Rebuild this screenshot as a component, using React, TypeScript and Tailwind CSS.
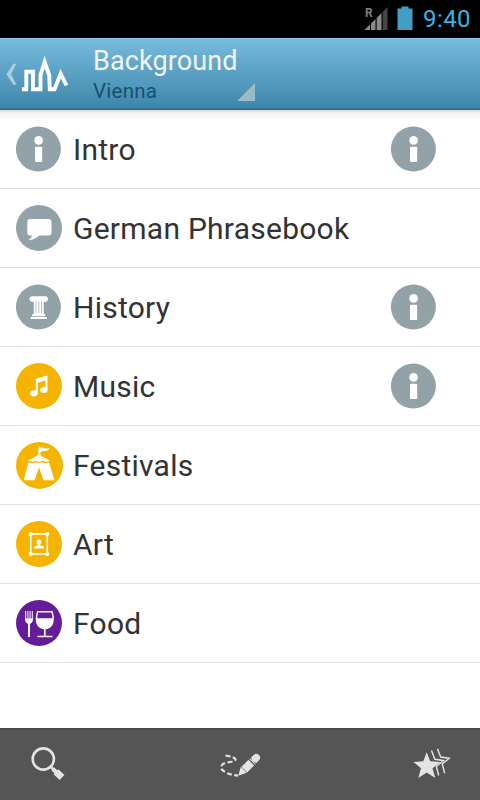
import React from "react";

const InfoIcon = () => (
  <svg className="size-12 shrink-0" viewBox="0 0 48 48">
    <circle cx="23.4" cy="24" r="22.5" fill="#93a1a8" />
    <circle cx="23.6" cy="15.4" r="4.3" fill="#fff" />
    <rect x="20" y="21.8" width="7.2" height="15.2" rx="1" fill="#fff" />
  </svg>
);

const PhraseIcon = () => (
  <svg className="size-12 shrink-0" viewBox="0 0 48 48">
    <circle cx="24" cy="24" r="23" fill="#93a1a8" />
    <path
      d="M15 15h18.500q3 0 3 3v10.500q0 3-3 3H24.500Q20 35.500 13.500 36.300Q17 34 17 31.500H15q-2.700 0-2.700-3V18q0-3 2.700-3z"
      fill="#fff"
    />
  </svg>
);

const HistoryIcon = () => (
  <svg className="size-12 shrink-0" viewBox="0 0 48 48">
    <circle cx="23.4" cy="24" r="22.5" fill="#93a1a8" />
    <g fill="#fff">
      <path d="M17.500 13.200h12.500a2.900 2.900 0 1 1-1.300 5.400V31H18.800V18.600a2.900 2.900 0 1 1-1.300-5.400z" />
      <rect x="17.2" y="31" width="13" height="2.2" />
      <rect x="15.7" y="34" width="16.3" height="2" />
    </g>
    <path d="M21 18.500V30M23.800 18.500V30M26.500 18.500V30" stroke="#93a1a8" strokeWidth="0.7" />
  </svg>
);

const MusicIcon = () => (
  <svg className="size-12 shrink-0" viewBox="0 0 48 48">
    <circle cx="24" cy="24" r="23" fill="#f5b400" />
    <g fill="#fff">
      <path d="M20.800 16.800L32.500 13.500V28H30.500V18.500L22.800 20.700V31H20.800z" />
      <ellipse cx="18.9" cy="31.3" rx="3.8" ry="3.1" />
      <ellipse cx="28.9" cy="28" rx="3.7" ry="3" />
    </g>
  </svg>
);

const FestivalIcon = () => (
  <svg className="size-12 shrink-0" viewBox="0 0 48 48">
    <circle cx="24.5" cy="24.4" r="23.5" fill="#f5b400" />
    <g fill="#fff">
      <path d="M23.400 5.500h1v1.300q3-.800 5 .200t5.700.3q-2 3-5 2.700t-4.700 1.200V14q4 3.500 9.300 5.200q-1.700 1.900-3.700 1.500t-3.800-.9q-3.300 1.700-6.500 0-2.200 1.100-4.200.9t-3.500-1.500q6.500-2 10.400-5.800z" />
      <path d="M13.300 21.300q4 1.700 7.200 0 3.200 1.500 6.500 0 3.500 1.700 7 0L39.500 39.200H28.500L24 26.500 19.600 39.200H8.800z" />
    </g>
  </svg>
);

const ArtIcon = () => (
  <svg className="size-12 shrink-0" viewBox="0 0 48 48">
    <circle cx="24" cy="24" r="23" fill="#f5b400" />
    <rect x="15.7" y="14" width="16.6" height="20" fill="none" stroke="#fff" strokeWidth="1.600" />
    <g fill="#fff">
      <circle cx="15.7" cy="14" r="2.1" />
      <circle cx="32.3" cy="14" r="2.1" />
      <circle cx="15.7" cy="34" r="2.1" />
      <circle cx="32.3" cy="34" r="2.1" />
      <ellipse cx="24" cy="22.2" rx="2.3" ry="2.6" />
      <path d="M23 24h2v1.300l3 .9q1 .5 1 2.200H19q0-1.700 1-2.200l3-.9z" />
    </g>
  </svg>
);

const FoodIcon = () => (
  <svg className="size-12 shrink-0" viewBox="0 0 48 48">
    <circle cx="24" cy="24" r="23" fill="#651c98" />
    <g stroke="#fff" fill="none">
      <path d="M10.700 12v9M12.900 12v9M15.100 12v9M17.300 12v9" strokeWidth="1" />
      <path d="M14 23v15" strokeWidth="2" />
      <path d="M22.600 12.700H37Q39.500 21 36.500 26Q34 29.500 29.800 29.500Q25.500 29.500 23 26Q20.200 21 22.600 12.700z" strokeWidth="1.500" />
      <path d="M29.800 29v8M22.500 37.500h15" strokeWidth="1.700" />
    </g>
    <path d="M10.200 19.500h7.600v1.500q0 3-3.800 4-3.800-1-3.800-4z" fill="#fff" />
    <path d="M21.800 19.200H38Q38.300 30 29.900 30T21.800 19.200z" fill="#fff" />
  </svg>
);

const items = [
  { name: "Intro", icon: <InfoIcon />, info: true },
  { name: "German Phrasebook", icon: <PhraseIcon />, info: false },
  { name: "History", icon: <HistoryIcon />, info: true },
  { name: "Music", icon: <MusicIcon />, info: true },
  { name: "Festivals", icon: <FestivalIcon />, info: false },
  { name: "Art", icon: <ArtIcon />, info: false },
  { name: "Food", icon: <FoodIcon />, info: false },
];

const StatusBar = () => (
  <div className="flex h-[38px] shrink-0 items-center justify-end bg-black pr-[9px]">
    <svg className="h-[38px] w-[26px]" viewBox="0 0 26 38">
      <text x="1" y="17" fontSize="12" fontWeight="700" fontFamily="Roboto" fill="#7d7d7d">
        R
      </text>
      <path d="M0.500 30L6 24.500V30zM7 23.500L11.500 19V30H7zM12.700 18L17.500 13V30H12.700z" fill="#8a8a8a" />
      <path d="M18.700 12L23.500 7V30H18.700z" fill="#454545" />
    </svg>
    <svg className="ml-[7px] h-[38px] w-4" viewBox="0 0 16 38">
      <path d="M4.500 6.500h7V8.500H15.500V30H0.500V8.500H4.500z" fill="#419fc6" />
    </svg>
    <span className="ml-[10px] pt-px text-[24px] leading-[37px] tracking-[0.4px] text-[#33b5e5]">9:40</span>
  </div>
);

const Header = () => (
  <header className="flex h-[72px] shrink-0 border-t border-b-2 border-t-[#86c5e6] border-b-[#2f7192] bg-gradient-to-b from-[#77bbdd] to-[#3e87aa]">
    <svg className="ml-[5px] mt-[23px] h-[24px] w-[12px]" viewBox="0 0 12 24">
      <path d="M8.300 1.800H11.500L6 12 11.500 22.700H8.300L1.500 12.300z" fill="#a9cfe1" />
    </svg>
    <svg className="ml-[3px] mt-[17px] h-9 w-[50px]" viewBox="0 0 50 36">
      <path
        d="M1.800 33.300H6.300V15.800H13V33.300H20.500V19L24.700 6L29.200 19L29.800 33.300H34.500L40.700 17.500L46.500 29.500"
        fill="none"
        stroke="#fff"
        strokeWidth="3.900"
      />
    </svg>
    <div className="ml-[23px] mt-[6px] flex w-[162px] flex-col">
      <span className="text-[27px] leading-8 tracking-[0.1px] text-[#f3f3f3]">Background</span>
      <div className="flex justify-between">
        <span className="pt-px text-[20.500px] leading-[26px] tracking-[0.25px] text-[#17506f]">Vienna</span>
        <svg className="mt-[6px] h-[18px] w-[18px]" viewBox="0 0 18 18">
          <path d="M18 0V18H0z" fill="#9cb9c6" />
        </svg>
      </div>
    </div>
  </header>
);

const BottomBar = () => (
  <nav className="flex h-[72px] shrink-0 items-center justify-between border-t-2 border-[#484848] bg-[#555555] px-7">
    <svg className="h-10 w-10" viewBox="0 0 40 40">
      <circle cx="15.3" cy="14" r="10.6" fill="none" stroke="#e4e4e4" strokeWidth="2.600" />
      <path d="M22.600 21.500L26.500 25.500" stroke="#e4e4e4" strokeWidth="2.600" />
      <path d="M28 26.800L34 32.600" stroke="#e4e4e4" strokeWidth="7" />
      <path d="M25 24L29 28" stroke="#e4e4e4" strokeWidth="4" />
    </svg>
    <svg className="h-10 w-[44px]" viewBox="0 0 44 40">
      <path
        d="M7.500 10.500Q17 12 17.500 14.500Q17.500 16.500 9 17.500Q2 19 3.500 24Q8 29.500 20 30.700"
        fill="none"
        stroke="#e4e4e4"
        strokeWidth="2.200"
        strokeDasharray="5 2.500"
      />
      <path d="M20.300 30.700L22.800 21.800L28.700 27.700z" fill="#e4e4e4" />
      <path d="M26.300 24.700L33.300 17.700" stroke="#e4e4e4" strokeWidth="8" />
      <path d="M34.200 16.800L34.900 16.100M35.800 15.200L36.500 14.500" stroke="#e4e4e4" strokeWidth="8" />
      <path d="M37.500 13.500L38.300 12.700" stroke="#e4e4e4" strokeWidth="7.500" strokeLinecap="round" />
    </svg>
    <svg className="h-10 w-10" viewBox="0 0 40 40">
      <path
        d="M14.700 7.300L18.200 16.300L28.500 17L20.500 23.200L23.300 33L14.700 27.600L6.300 33L9 23.200L1.500 17L11.300 16.300z"
        fill="#e4e4e4"
      />
      <path
        d="M19.500 5.500L22.800 14.300L31.500 15.500L24.300 21.500L26.700 30.500M25.500 3.700L28.700 12L37.300 13.200L30.200 19L32.700 28.300"
        fill="none"
        stroke="#e4e4e4"
        strokeWidth="1.400"
      />
    </svg>
  </nav>
);

const App = () => {
  return (
    <div className="flex h-[800px] w-[480px] flex-col overflow-hidden bg-white font-['Roboto',sans-serif]">
      <StatusBar />
      <Header />
      <main className="flex-1 bg-[linear-gradient(to_bottom,#d8d8d8_0px,#f4f4f4_3px,#ffffff_12px)]">
        {items.map((item) => (
          <div
            key={item.name}
            className="flex h-[79px] items-center border-b border-[#e2e2e2] pl-[15px] pr-[42px]"
          >
            {item.icon}
            <span className="ml-[10px] flex-1 pt-[2px] text-[30px] leading-9 tracking-[0.25px] text-[#333333]">
              {item.name}
            </span>
            {item.info && <InfoIcon />}
          </div>
        ))}
      </main>
      <BottomBar />
    </div>
  );
};

export default App;
